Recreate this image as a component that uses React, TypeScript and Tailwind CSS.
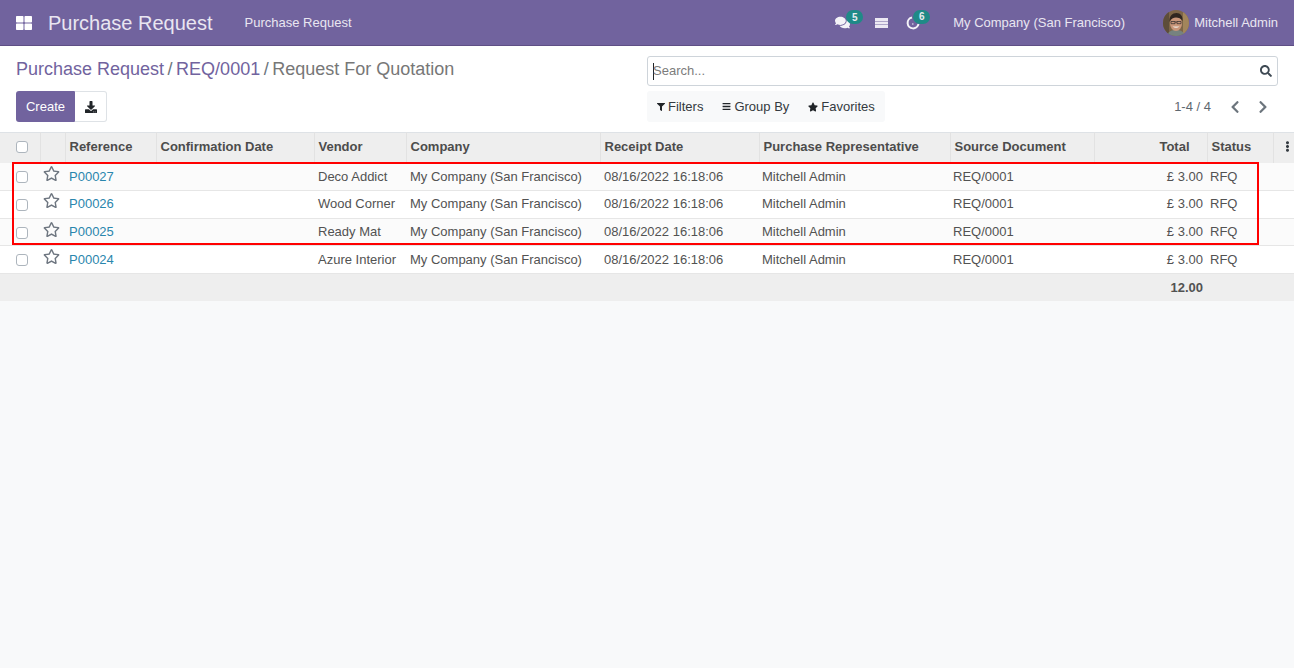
import { FaBars, FaChevronLeft, FaChevronRight, FaComments, FaDownload, FaEllipsisV, FaFilter, FaRegStar, FaSearch, FaStar, FaThLarge } from "react-icons/fa";

const columns = [
  { label: "Reference", width: "w-[91px]" },
  { label: "Confirmation Date", width: "w-[158px]" },
  { label: "Vendor", width: "w-[92px]" },
  { label: "Company", width: "w-[194px]" },
  { label: "Receipt Date", width: "w-[159px]" },
  { label: "Purchase Representative", width: "w-[191px]" },
  { label: "Source Document", width: "w-[144px]" },
];

const orders = [
  { ref: "P00027", vendor: "Deco Addict", row: "h-[28px] bg-[#fbfbfb]", cell: "" },
  { ref: "P00026", vendor: "Wood Corner", row: "h-[28px] bg-white", cell: "pb-[2px]" },
  { ref: "P00025", vendor: "Ready Mat", row: "h-[27px] bg-[#fbfbfb]", cell: "" },
  { ref: "P00024", vendor: "Azure Interior", row: "h-[28px] bg-white", cell: "" },
];

function Checkbox() {
  return <span className="block h-3 w-3 rounded-[3px] border border-[#adb5bd] bg-white" />;
}

function Badge({ count, position }: { count: number; position: string }) {
  return (
    <span className={`absolute flex h-[14px] w-[17px] items-center justify-center rounded-full bg-[#1f8a87] text-[10px] font-bold text-[#e9ecef] ${position}`}>
      {count}
    </span>
  );
}

function Avatar() {
  return (
    <svg viewBox="0 0 26 26" className="h-[26px] w-[26px] rounded-full">
      <rect width="26" height="26" fill="#7d6547" />
      <rect x="0" y="0" width="6" height="26" fill="#5d4d3a" />
      <rect x="20" y="0" width="6" height="26" fill="#a2855b" />
      <path d="M4 26c1-5 5-6 9-6s8 1 9 6z" fill="#76827f" />
      <ellipse cx="13" cy="13.500" rx="6" ry="7.500" fill="#c9967a" />
      <path d="M6.500 12c-.5-6 3-9 7-9s6.500 3 6 8c-1.500-3-4-3.500-6.500-3.500s-5 1-6.500 4.500z" fill="#2f2620" />
      <path d="M8 11.500h4v2.200H8zM14 11.500h4v2.200h-4zM12 12h2" fill="none" stroke="#2b2a2a" strokeWidth="0.7" />
      <path d="M9.500 16.500c2 1.800 5 1.800 7 0" fill="#f1e9e2" />
    </svg>
  );
}

export default function App() {
  return (
    <div className="flex min-h-[668px] flex-col bg-[#f8f9fa] font-['Liberation_Sans',sans-serif] text-[13px] text-[#525252]">
      <header className="flex h-[46px] items-center border-b border-[#5f4f85] bg-[#71639e] text-[#e9e6f1]">
        <FaThLarge className="ml-4 text-[16px] text-white" />
        <span className="ml-4 text-[20px] leading-none">Purchase Request</span>
        <span className="ml-8">Purchase Request</span>
        <div className="ml-auto flex items-center">
          <span className="relative">
            <FaComments className="text-[15px] text-[#f4f3f8]" />
            <Badge count={5} position="-top-[5px] left-[11px]" />
          </span>
          <svg viewBox="0 0 13 10" className="ml-[25px] h-[10px] w-[13px] fill-[#ece9f3]">
            <path d="M0 0h13v3H0zM0 3.500h13v3H0zM0 7h13v3H0z" />
          </svg>
          <span className="relative ml-[18px]">
            <svg viewBox="0 0 14 14" className="h-[14px] w-[14px] fill-none stroke-[#f4f3f8] stroke-[2]">
              <path d="M6 1.500A5.500 5.500 0 1 0 12.500 8" />
              <path d="M6 8h1.500" strokeWidth="1" />
            </svg>
            <Badge count={6} position="-top-[6px] left-[7px]" />
          </span>
          <span className="ml-[33px]">My Company (San Francisco)</span>
          <span className="ml-[38px]">
            <Avatar />
          </span>
          <span className="ml-[5px] mr-4">Mitchell Admin</span>
        </div>
      </header>

      <section className="flex justify-between bg-white pb-[10px] pl-4 pr-4 pt-[10px]">
        <div>
          <nav className="flex h-[26px] items-center text-[18px] leading-none">
            <a className="text-[#71639e]">Purchase Request</a>
            <span className="mx-[3.500px] text-[#6c757d]">/</span>
            <a className="text-[#71639e]">REQ/0001</a>
            <span className="mx-[3.500px] text-[#6c757d]">/</span>
            <span className="text-[#777]">Request For Quotation</span>
          </nav>
          <div className="mt-[9px] flex">
            <button className="h-[31px] w-[59px] rounded-l-[3px] rounded-r-[1px] bg-[#71639e] text-white">Create</button>
            <button className="flex h-[31px] w-[32px] items-center justify-center rounded-r-[3px] border border-[#dee2e6] border-l-0 bg-white text-[#212529]">
              <FaDownload className="text-[12px]" />
            </button>
          </div>
        </div>
        <div className="w-[631px]">
          <div className="flex h-[30px] items-center rounded-[3px] border border-[#ced4da] bg-white pl-[5px] pr-[5px]">
            <span className="h-[17px] w-px bg-[#212529]" />
            <span className="-ml-px text-[#7c7c7c]">Search...</span>
            <FaSearch className="ml-auto text-[12px] text-[#3f4a54]" />
          </div>
          <div className="mt-[5px] flex items-center justify-between">
            <div className="flex h-[31px] items-center rounded-[3px] bg-[#f8f9fa] px-[10px] text-[#343a40]">
              <FaFilter className="mr-[3px] text-[8px] text-[#212529]" />
              <span>Filters</span>
              <FaBars className="ml-[19px] mr-[3px] text-[9px] text-[#212529]" />
              <span>Group By</span>
              <FaStar className="ml-[19px] mr-[3px] text-[10px] text-[#212529]" />
              <span>Favorites</span>
            </div>
            <div className="flex items-center text-[#5f6870]">
              <span>1-4 / 4</span>
              <FaChevronLeft className="ml-[17px] text-[14px] text-[#6c757d]" />
              <FaChevronRight className="ml-[14px] mr-[8px] text-[14px] text-[#6c757d]" />
            </div>
          </div>
        </div>
      </section>

      <div className="relative">
        <table className="w-full table-fixed border-collapse border-t border-[#dee2e6]">
          <thead className="bg-[#eeeeee] font-bold text-[#4c4c4c]">
            <tr className="h-[30px] text-left">
              <th className="w-[40px] pb-[2px] pl-4"><Checkbox /></th>
              <th className="w-[25px] border-l border-[#e2e2e2]" />
              {columns.map((col) => (
                <th key={col.label} className={`${col.width} border-l border-[#e2e2e2] pb-[2px] pl-1 font-bold`}>{col.label}</th>
              ))}
              <th className="w-[113px] border-l border-[#e2e2e2] pb-[2px] pr-[17px] text-right font-bold">Total</th>
              <th className="w-[66px] border-l border-[#e2e2e2] pb-[2px] pl-1 font-bold">Status</th>
              <th className="border-l border-[#e2e2e2] pb-[2px] pl-[8px]"><FaEllipsisV className="text-[11px] text-[#343a40]" /></th>
            </tr>
          </thead>
          <tbody>
            {orders.map((order) => (
              <tr key={order.ref} className={`${order.row} border-b border-[#e6e6e6]`}>
                <td className="pl-4 pt-[1px]"><Checkbox /></td>
                <td className={`${order.cell} pl-[3px]`}><FaRegStar className="-mt-[6px] text-[17px] text-[#6e7680]" /></td>
                <td className={`${order.cell} pl-1 text-[#2a86ad]`}>{order.ref}</td>
                <td />
                <td className={`${order.cell} pl-1`}>{order.vendor}</td>
                <td className={`${order.cell} pl-1`}>My Company (San Francisco)</td>
                <td className={`${order.cell} pl-1`}>08/16/2022 16:18:06</td>
                <td className={`${order.cell} pl-[3px]`}>Mitchell Admin</td>
                <td className={`${order.cell} pl-[3px]`}>REQ/0001</td>
                <td className={`${order.cell} pr-1 text-right`}>£ 3.00</td>
                <td className={`${order.cell} pl-[3px]`}>RFQ</td>
                <td />
              </tr>
            ))}
          </tbody>
          <tfoot className="bg-[#eeeeee]">
            <tr className="h-[27px]">
              <td colSpan={9} />
              <td className="pr-1 text-right font-bold">12.00</td>
              <td colSpan={2} />
            </tr>
          </tfoot>
        </table>
        <div className="pointer-events-none absolute left-3 top-[30px] h-[83px] w-[1247px] border-2 border-[#ff0000]" />
      </div>
    </div>
  );
}
